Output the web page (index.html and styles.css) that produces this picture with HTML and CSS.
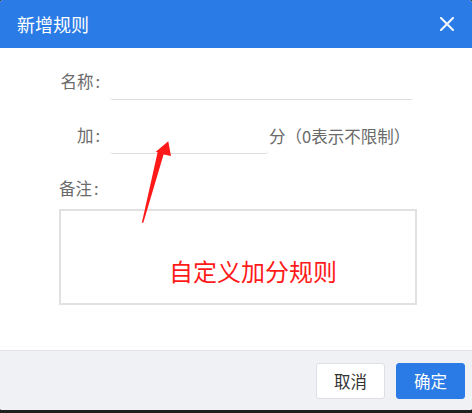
FILE: index.html
```html
<!DOCTYPE html>
<html lang="zh-CN">
<head>
<meta charset="utf-8">
<title>新增规则</title>
<link rel="stylesheet" href="styles.css">
</head>
<body>
<div class="dialog">
  <div class="header">
    <span class="title">新增规则</span>
    <svg class="close" width="14" height="14" viewBox="0 0 14 14"><path d="M1 1 L13 13 M13 1 L1 13" stroke="#eef4fd" stroke-width="2.2" stroke-linecap="square" fill="none"/></svg>
  </div>
  <div class="body">
    <div class="row">
      <label class="label">名称<span class="colon">:</span></label>
      <input class="field field-long" type="text">
    </div>
    <div class="row row-two">
      <label class="label">加<span class="colon">:</span></label>
      <input class="field field-short" type="text">
      <span class="unit">分（0表示不限制）</span>
    </div>
    <div class="note-label">备注<span class="colon">:</span></div>
    <textarea class="note"></textarea>
    <div class="annot">自定义加分规则</div>
  </div>
  <div class="footer">
    <button class="btn btn-cancel">取消</button>
    <button class="btn btn-ok">确定</button>
  </div>
  <svg class="arrow" width="472" height="413" viewBox="0 0 472 413"><polygon points="141.8,223 157.6,152.3 155.8,151.8 168.3,141.3 171,156 163.6,154.6 143.4,222.4" fill="#ff1a1a"/></svg>
</div>
</body>
</html>
```

FILE: styles.css
```css
* { box-sizing: border-box; }
html, body { margin: 0; padding: 0; }
body {
  background: #1f1f1f;
  width: 472px;
  height: 413px;
  overflow: hidden;
  font-family: "Noto Sans CJK SC", "Noto Sans", sans-serif;
}
.dialog {
  position: relative;
  width: 472px;
  height: 410px;
  background: #fff;
  border-radius: 3px 3px 2px 2px;
  display: flex;
  flex-direction: column;
  overflow: hidden;
}
.header {
  height: 48px;
  background: #2a7be5;
  display: flex;
  align-items: center;
  justify-content: space-between;
  padding: 0 18px 0 17px;
}
.title {
  color: #fff;
  font-size: 18px;
  line-height: 24px;
}
.close { display: block; }
.body {
  flex: 1;
  padding: 16px 0 0 59px;
  position: relative;
}
.row {
  display: flex;
  align-items: center;
  height: 36px;
}
.row-two { margin-top: 18px; }
.label {
  width: 41px;
  text-align: right;
  font-size: 16.5px;
  color: #6a6a6a;
  line-height: 24px;
  margin-bottom: 2px;
  white-space: nowrap;
}
.colon { margin-left: 2px; }
.field {
  height: 36px;
  margin-left: 10px;
  border: none;
  border-bottom: 1px solid #dedede;
  border-radius: 0 0 3px 3px;
  outline: none;
  background: transparent;
  font-size: 16px;
}
.field-long { width: 303px; }
.field-short { width: 158px; }
.unit {
  font-size: 16.5px;
  color: #6a6a6a;
  line-height: 24px;
  margin-left: 1px;
}
.note-label {
  font-size: 16.5px;
  color: #6a6a6a;
  line-height: 24px;
  margin-top: 22px;
}
.note {
  display: block;
  width: 358px;
  height: 96px;
  margin-top: 9px;
  border: 2px solid #e1e1e1;
  resize: none;
  outline: none;
  background: #fff;
}
.annot {
  position: absolute;
  left: 169px;
  top: 211px;
  font-size: 24px;
  line-height: 24px;
  color: #ff1a1a;
  white-space: nowrap;
}
.footer {
  height: 60px;
  background: #f0f1f5;
  border-top: 1px solid #e2e4ea;
  display: flex;
  align-items: center;
  justify-content: flex-end;
  gap: 11px;
  padding-right: 7px;
}
.btn {
  width: 69px;
  height: 36px;
  border-radius: 3px;
  font-family: "Noto Sans CJK SC", "Noto Sans", sans-serif;
  font-size: 16.5px;
  padding: 0;
  cursor: pointer;
}
.btn-cancel {
  background: #fff;
  border: 1px solid #dcdfe6;
  color: #333;
}
.btn-ok {
  background: #2a7be5;
  border: 1px solid #2a7be5;
  color: #fff;
}
.arrow {
  position: absolute;
  left: 0;
  top: 0;
  pointer-events: none;
}
```
